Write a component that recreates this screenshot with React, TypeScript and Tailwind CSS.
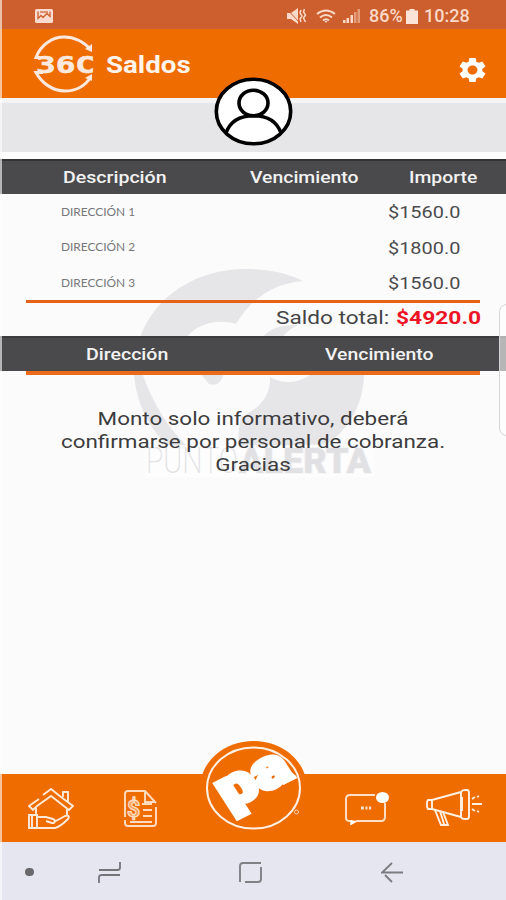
import { ReactNode } from "react";
import { MdSettings } from "react-icons/md";

const balances = [
  { name: "DIRECCIÓN 1", amount: "$1560.0" },
  { name: "DIRECCIÓN 2", amount: "$1800.0" },
  { name: "DIRECCIÓN 3", amount: "$1560.0" },
];

function Label({ className = "", children }: { className?: string; children: ReactNode }) {
  return (
    <span className={`inline-block origin-left whitespace-nowrap ${className}`}>
      {children}
    </span>
  );
}

function StatusBar() {
  return (
    <div className="flex h-[29px] shrink-0 items-center bg-[#cc5f2d] pl-[35px] pt-[3px] text-[#fbd9c8]">
      <svg width="18" height="14" viewBox="0 0 18 14">
        <rect width="18" height="14" rx="1.5" fill="#f9dccf" />
        <path d="M3 2.500v7l3-3 2 2 4-4 3 3v-5" stroke="#cc5f2d" strokeWidth="1.3" fill="none" />
        <path d="M5 3h8" stroke="#cc5f2d" strokeWidth="1.2" />
      </svg>
      <svg className="ml-[234px]" width="20" height="16" viewBox="0 0 20 16" fill="#fbd9c8">
        <path d="M0 5h4l7-5v16l-7-5H0z" />
        <path d="M0 1l12 13" stroke="#cc5f2d" strokeWidth="1" />
        <path d="M14 2l-1 3 2 3-2 3 1 3M17.500 1l-1 3 2 3-2 3 2 4" fill="none" stroke="#fbd9c8" strokeWidth="1.500" />
      </svg>
      <svg className="ml-[9px]" width="20" height="15" viewBox="0 0 20 15" fill="none" stroke="#fbd9c8" strokeWidth="2">
        <path d="M1 5Q10-2 19 5" />
        <path d="M4 8.500Q10 3.500 16 8.500" />
        <path d="M7 11.500Q10 9 13 11.500" />
        <path d="M8.500 12h3L10 14z" fill="#fbd9c8" stroke="none" />
      </svg>
      <svg className="ml-[7px]" width="17" height="14" viewBox="0 0 17 14" fill="#fbd9c8">
        <path d="M0 11h2.500v3H0zM3.500 9H6v5H3.500zM7.500 6H10v8H7.500z" />
        <path d="M11 3h2.500v11H11zM14.500 0H17v14h-2.500z" opacity=".5" />
      </svg>
      <div className="ml-[9px] w-[35px]">
        <Label className="font-['Roboto',sans-serif] text-[18px] font-medium leading-5">86%</Label>
      </div>
      <svg className="ml-[2px]" width="12" height="15" viewBox="0 0 12 15" fill="#fbe3d8">
        <path d="M3.500 0h5v1.500H12V15H0V1.500h3.500z" />
      </svg>
      <Label className="ml-[6px] font-['Roboto',sans-serif] text-[18px] font-medium leading-5">10:28</Label>
    </div>
  );
}

function Logo360() {
  return (
    <svg width="64" height="58" viewBox="0 0 64 58" fill="none" stroke="#fbe9df" strokeWidth="3">
      <path d="M10 22.500H3C8 9 20 2 31 2c11 0 20 5 27 13" />
      <path d="M10 37.500H3c6 11 17 18.500 29 18.500 11 0 20-5 26-14" />
      <path d="M52 14l7-5v8zM52 43l7-4v7z" fill="#fbe9df" stroke="none" />
      <text
        x="3"
        y="38"
        textLength="59"
        lengthAdjust="spacingAndGlyphs"
        fill="#fbe9df"
        strokeWidth="0.6"
        className="font-['DejaVu_Sans_Mono',monospace] text-[22.500px] font-bold"
      >
        36C
      </text>
    </svg>
  );
}

function Header() {
  return (
    <header className="flex h-[69px] shrink-0 items-center justify-between bg-[#ef6c00] pl-[33px] pr-[17px]">
      <div className="flex items-center">
        <Logo360 />
        <Label className="ml-[9px] mt-[4px] scale-x-[1.13] font-['Roboto',sans-serif] text-[24.500px] font-bold text-[#fff3ea]">
          Saldos
        </Label>
      </div>
      <MdSettings preserveAspectRatio="none" className="mt-3 h-[30px] w-[33px] text-white" />
    </header>
  );
}

function Avatar() {
  return (
    <svg className="absolute left-[214px] top-[77px]" width="79" height="69" viewBox="0 0 79 69" fill="none" stroke="#000" strokeWidth="3.600">
      <ellipse cx="39.500" cy="34.500" rx="37.200" ry="32.300" fill="#fff" />
      <ellipse cx="39.500" cy="26" rx="14.500" ry="12.800" />
      <path d="M12 56C16 45 25 38.800 39.500 38.800S63 45 67 56" />
    </svg>
  );
}

function Watermark() {
  return (
    <svg className="absolute left-[130px] top-[265px]" width="246" height="225" viewBox="130 265 246 225" fill="#e6e6e8">
      <path d="M139 340C154 296 196 269 246 269c22 0 42 4 57 12-31 3-51 17-67 43-18-6-40 0-50 14z" />
      <path d="M262 338c8-10 18-13 36-13-8 4-13 8-16 13z" />
      <path d="M134 373c2 31 16 58 38 76h18c-22-20-37-46-48-76z" />
      <path d="M200 373l9 11c8 2 12-1 15-11z" />
      <path d="M270 377c15 9 31 5 43-4h51c0 32-16 57-37 71l-89 4c0-12 1-21 3-31 17-8 30-20 29-40z" />
      <rect x="146" y="445" width="228" height="32" fill="#fdfdfd" opacity=".7" />
      <text x="146" y="473" textLength="92" lengthAdjust="spacingAndGlyphs" className="font-['Roboto',sans-serif] text-[36px] font-extralight" fill="#e2e2e5">
        PUNTO
      </text>
      <text x="239" y="473" textLength="132" lengthAdjust="spacingAndGlyphs" className="font-['Roboto',sans-serif] text-[35px] font-black" fill="#e1e1e4" stroke="#f6f6f7" strokeWidth="2" paintOrder="stroke">
        ALERTA
      </text>
    </svg>
  );
}

function BalanceTable() {
  return (
    <section className="relative font-['Roboto',sans-serif]">
      <div className="flex h-[35px] items-center border-t-2 border-[#343436] bg-[#4a4a4c] pl-[63px] text-[17px] font-medium text-[#f2f2f2]">
        <div className="w-[187px]"><Label className="scale-x-[1.15]">Descripción</Label></div>
        <div className="w-[159px]"><Label className="scale-x-[1.14]">Vencimiento</Label></div>
        <Label className="scale-x-[1.14]">Importe</Label>
      </div>
      <div className="mx-[26px] h-[109px] border-b-[3px] border-[#e66219] pt-px">
        {balances.map((item) => (
          <div key={item.name} className="flex h-[35.5px] items-center pl-[35px]">
            <div className="w-[327px]">
              <Label className="-mt-[3px] scale-x-[1.08] align-middle font-['Lato',sans-serif] text-[11px] text-[#77777a]">
                {item.name}
              </Label>
            </div>
            <Label className="scale-x-[1.17] text-[17px] text-[#4b4b4d]">{item.amount}</Label>
          </div>
        ))}
      </div>
      <div className="flex h-[33px] items-center pb-[3px] pl-[276px] text-[19px]">
        <div className="w-[120px]"><Label className="scale-x-[1.19] text-[#444446]">Saldo total:</Label></div>
        <Label className="scale-x-[1.2] font-bold text-[#ed1525]">$4920.0</Label>
      </div>
      <div className="flex h-[35px] items-center border-t-2 border-[#3c3c3e] bg-[#4a4a4c] pl-[86px] text-[17px] font-medium text-[#f2f2f2]">
        <div className="w-[239px]"><Label className="scale-x-[1.15]">Dirección</Label></div>
        <Label className="scale-x-[1.14]">Vencimiento</Label>
      </div>
      <div className="mx-[26px] h-1 bg-[#eb6b18]" />
      <p className="mt-[32px] flex origin-center scale-x-[1.18] flex-col items-center text-[19px] leading-[23px] text-[#3c3c3e]">
        <span>Monto solo informativo, deberá</span>
        <span>confirmarse por personal de cobranza.</span>
        <span>Gracias</span>
      </p>
    </section>
  );
}

function PaBadge() {
  return (
    <svg className="absolute left-[200px] top-[-34px] overflow-visible" width="107" height="92" viewBox="200 740 107 92">
      <ellipse cx="253.500" cy="788" rx="53.500" ry="47" fill="#ef6c00" />
      <text
        transform="matrix(.89 -.45 .54 .84 229 810)"
        textLength="74"
        lengthAdjust="spacingAndGlyphs"
        fill="#fff"
        stroke="#fff"
        strokeWidth="4.500"
        className="font-['Roboto',sans-serif] text-[56px] font-black"
      >
        pa
      </text>
      <ellipse cx="253.500" cy="788" rx="46.500" ry="40.500" fill="none" stroke="#fff1e6" strokeWidth="2" />
      <circle cx="296.500" cy="812" r="2" fill="none" stroke="#ffd2ae" />
    </svg>
  );
}

function TabBar() {
  return (
    <nav className="relative flex h-[68px] shrink-0 items-center bg-[#ef6c00]">
      <svg className="ml-[28px]" width="46" height="41" viewBox="0 0 46 41" fill="none" stroke="#ffead9" strokeWidth="1.900">
        <path d="M15 7l8-6 10 8 12 9-4 4L23 8 9 18l-4 4-4-4 10-7" />
        <path d="M35 9V4h5v10M8 20v8M39 21v7" />
        <path d="M1 27h8v13H1zM4 27v13M9 29h9l7 2c3 1 2 5-1 4l-6-2M26 34l11-6c3-1 5 0 3 3-4 4-8 8-13 9H9" />
      </svg>
      <svg className="ml-[50px]" width="33" height="37" viewBox="0 0 33 37" fill="none" stroke="#ffdcc0" strokeWidth="1.900">
        <path d="M1 27V4q0-3 3-3h17l11 12M21 1v11h10M32 17v16q0 3-3 3H4q-3 0-3-3v-3" />
        <path d="M18 14h10M19 20h9M19 26h9M6 32h22" />
        <text x="3" y="27" fill="#ff9c55" stroke="#ffdcc0" strokeWidth="1.300" className="font-['Roboto',sans-serif] text-[23px] font-bold">$</text>
      </svg>
      <svg className="ml-[188px]" width="45" height="35" viewBox="0 0 45 35" fill="none" stroke="#ffe1ca" strokeWidth="1.900">
        <path d="M30 4H5Q1 4 1 8v19q0 3 4 3h1v3l6-3h24q4 0 4-4V12" />
        <path d="M6 29v5l5-4z" fill="#fff" stroke="none" />
        <path d="M16 17h3M20.500 17h2M24 17h2" strokeWidth="3" />
        <ellipse cx="37.500" cy="6.500" rx="6.500" ry="5.500" fill="#fff" stroke="none" />
      </svg>
      <svg className="ml-[36px]" width="57" height="38" viewBox="0 0 57 38" fill="none" stroke="#fff0e4" strokeWidth="1.900">
        <path d="M6 11L35 3M6 20l29 8M2 11h4v9H2l-1-2v-5zM35 3q1-2 4-2h2q2 0 2 3v23q0 3-2 3h-2q-4 0-4-3zM36 8v14" />
        <path d="M9 21l6 15h7l-5-13M14 22l4 13" />
        <path d="M46 15h10M46 10l3-2M51 8l2-1M46 20l3 2M51 22l2 1" />
      </svg>
      <PaBadge />
    </nav>
  );
}

function SystemNav() {
  return (
    <div className="flex h-[58px] shrink-0 items-center bg-[#e6e6f0] pl-[25px] pt-[2px]">
      <div className="h-2 w-[9px] rounded-full bg-[#69696d]" />
      <svg className="ml-[64px]" width="23" height="21" viewBox="0 0 23 21" fill="none" stroke="#747479" strokeWidth="1.800">
        <path d="M1 8h18q3 0 3-2V0M22 13H4q-3 0-3 2v6" />
      </svg>
      <svg className="ml-[118px]" width="23" height="21" viewBox="0 0 23 21" fill="none" stroke="#808085" strokeWidth="1.900">
        <path d="M1 20V4q0-3 3-3h18M22 5v12q0 3-3 3H6" />
      </svg>
      <svg className="ml-[119px]" width="22" height="21" viewBox="0 0 22 21" fill="none" stroke="#7c7c81" strokeWidth="1.900">
        <path d="M22 10.500H1L11 1M4 13l7 7" />
      </svg>
    </div>
  );
}

export default function App() {
  return (
    <div className="relative flex h-[900px] w-[506px] flex-col overflow-hidden bg-[#fbfbfb]">
      <StatusBar />
      <Header />
      <div className="h-[61px] shrink-0 border-b-[7px] border-t-[5px] border-b-[#fdfdfd] border-t-[#f4f4f4] bg-[#e6e6e8]" />
      <Avatar />
      <Watermark />
      <main className="flex-1">
        <BalanceTable />
      </main>
      <TabBar />
      <SystemNav />
      {/* Edge panel handle */}
      <div className="absolute left-[499px] top-[304px] h-[132px] w-4 rounded-l-lg border border-[#d5d5d7] bg-white/60" />
      <div className="absolute left-0 top-0 h-full w-[2px] bg-white/60" />
    </div>
  );
}
